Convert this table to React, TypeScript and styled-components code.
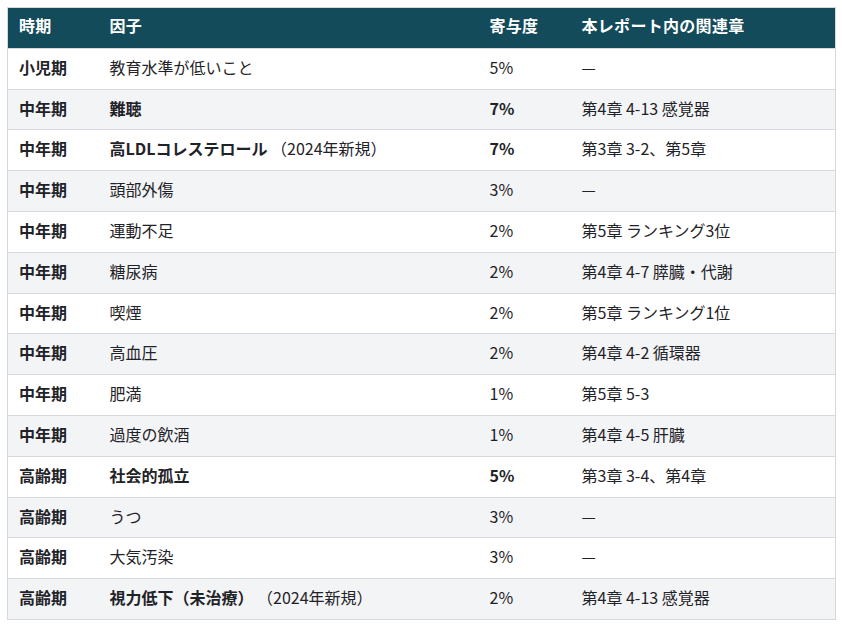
import React from 'react';
import styled, { createGlobalStyle } from 'styled-components';

const GlobalStyle = createGlobalStyle`
  html, body {
    margin: 0;
    padding: 0;
    background: #ffffff;
  }
  body {
    font-family: "Noto Sans CJK JP", "Noto Sans", sans-serif;
    color: #1f2328;
  }
`;

const Page = styled.div`
  padding: 7px 6px 0 7px;
`;

const Table = styled.table`
  width: 100%;
  border-collapse: collapse;
  table-layout: fixed;
  border: 1px solid #d5d9dd;
  font-size: 16px;
`;

const HeadCell = styled.th`
  background: #134b5b;
  color: #ffffff;
  font-weight: 700;
  text-align: left;
  padding: 7px 11px 11px;
  line-height: 21.8px;
  letter-spacing: 0.3px;
`;

const Row = styled.tr<{ $shaded: boolean }>`
  background: ${(p) => (p.$shaded ? '#f3f4f6' : '#ffffff')};
  border-top: 1px solid #d5d9dd;
`;

const Cell = styled.td<{ $bold?: boolean }>`
  padding: 8px 11px 10px;
  line-height: 21.8px;
  font-weight: ${(p) => (p.$bold ? 700 : 400)};
  white-space: nowrap;
`;

const Strong = styled.span`
  font-weight: 700;
`;

type Item = {
  period: string;
  factor: string;
  note?: string;
  strong?: boolean;
  share: string;
  strongShare?: boolean;
  chapter: string;
};

const items: Item[] = [
  { period: '小児期', factor: '教育水準が低いこと', share: '5%', chapter: '—' },
  { period: '中年期', factor: '難聴', strong: true, share: '7%', strongShare: true, chapter: '第4章 4-13 感覚器' },
  { period: '中年期', factor: '高LDLコレステロール', note: '（2024年新規）', strong: true, share: '7%', strongShare: true, chapter: '第3章 3-2、第5章' },
  { period: '中年期', factor: '頭部外傷', share: '3%', chapter: '—' },
  { period: '中年期', factor: '運動不足', share: '2%', chapter: '第5章 ランキング3位' },
  { period: '中年期', factor: '糖尿病', share: '2%', chapter: '第4章 4-7 膵臓・代謝' },
  { period: '中年期', factor: '喫煙', share: '2%', chapter: '第5章 ランキング1位' },
  { period: '中年期', factor: '高血圧', share: '2%', chapter: '第4章 4-2 循環器' },
  { period: '中年期', factor: '肥満', share: '1%', chapter: '第5章 5-3' },
  { period: '中年期', factor: '過度の飲酒', share: '1%', chapter: '第4章 4-5 肝臓' },
  { period: '高齢期', factor: '社会的孤立', strong: true, share: '5%', strongShare: true, chapter: '第3章 3-4、第4章' },
  { period: '高齢期', factor: 'うつ', share: '3%', chapter: '—' },
  { period: '高齢期', factor: '大気汚染', share: '3%', chapter: '—' },
  { period: '高齢期', factor: '視力低下（未治療）', note: '（2024年新規）', strong: true, share: '2%', chapter: '第4章 4-13 感覚器' },
];

export default function App() {
  return (
    <Page>
      <GlobalStyle />
      <Table>
        <colgroup>
          <col style={{ width: 91 }} />
          <col style={{ width: 380 }} />
          <col style={{ width: 92 }} />
          <col />
        </colgroup>
        <thead>
          <tr>
            <HeadCell>時期</HeadCell>
            <HeadCell>因子</HeadCell>
            <HeadCell>寄与度</HeadCell>
            <HeadCell>本レポート内の関連章</HeadCell>
          </tr>
        </thead>
        <tbody>
          {items.map((it, i) => (
            <Row key={i} $shaded={i % 2 === 1}>
              <Cell $bold>{it.period}</Cell>
              <Cell>
                {it.strong ? <Strong>{it.factor}</Strong> : it.factor}
                {it.note && ` ${it.note}`}
              </Cell>
              <Cell $bold={it.strongShare}>{it.share}</Cell>
              <Cell>{it.chapter}</Cell>
            </Row>
          ))}
        </tbody>
      </Table>
    </Page>
  );
}
